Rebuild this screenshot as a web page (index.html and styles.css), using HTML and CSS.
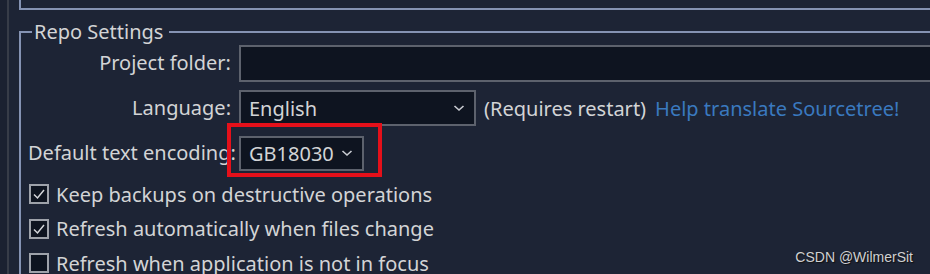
FILE: index.html
```html
<!DOCTYPE html>
<html>
<head>
<meta charset="utf-8">
<link rel="stylesheet" href="styles.css">
</head>
<body>
<div class="app">
  <div class="strip"></div>
  <div class="main">
    <div class="wide">
      <div class="topbox"></div>
      <div class="group">
        <div class="group-head">
          <div class="seg"></div>
          <div class="title">Repo Settings</div>
          <div class="rule"></div>
        </div>
        <div class="group-body">
          <div class="form">
            <div class="label">Project folder:</div>
            <div class="field"><div class="input"></div></div>
            <div class="label">Language:</div>
            <div class="field">
              <div class="select lang">
                <span>English</span>
                <svg class="chev" width="12" height="8" viewBox="0 0 12 8"><polyline points="1.5,2 6,6 10.5,2" fill="none" stroke="#c9ccd2" stroke-width="1.6"/></svg>
              </div>
              <span class="note">(Requires restart)</span>
              <span class="link">Help translate Sourcetree!</span>
            </div>
            <div class="label">Default text encoding:</div>
            <div class="field">
              <div class="select enc">
                <span>GB18030</span>
                <svg class="chev" width="12" height="8" viewBox="0 0 12 8"><polyline points="1.5,2 6,6 10.5,2" fill="none" stroke="#c9ccd2" stroke-width="1.6"/></svg>
                <div class="highlight"></div>
              </div>
            </div>
          </div>
          <div class="checks">
            <div class="check-row">
              <div class="box"><svg width="16" height="16" viewBox="0 0 16 16"><polyline points="3,8.5 6.5,12 13,4" fill="none" stroke="#d4d6da" stroke-width="1.5"/></svg></div>
              <span>Keep backups on destructive operations</span>
            </div>
            <div class="check-row">
              <div class="box"><svg width="16" height="16" viewBox="0 0 16 16"><polyline points="3,8.5 6.5,12 13,4" fill="none" stroke="#d4d6da" stroke-width="1.5"/></svg></div>
              <span>Refresh automatically when files change</span>
            </div>
            <div class="check-row">
              <div class="box"></div>
              <span>Refresh when application is not in focus</span>
            </div>
          </div>
        </div>
      </div>
    </div>
  </div>
</div>
<div class="watermark">CSDN @WilmerSit</div>
</body>
</html>
```
FILE: styles.css
```css
html, body {
  margin: 0;
  padding: 0;
}
body {
  width: 930px;
  height: 274px;
  overflow: hidden;
  background: #1d2435;
  font-family: "Noto Sans", "Open Sans", sans-serif;
  font-size: 20px;
  color: #d3d4d6;
  position: relative;
}
.app {
  display: flex;
  height: 274px;
}
.strip {
  width: 7px;
  flex: none;
  background: #1b2131;
  border-right: 2px solid #373c48;
}
.main {
  flex: 1;
  min-width: 0;
  overflow: hidden;
  padding-left: 10px;
}
.wide {
  width: calc(100% + 40px);
}
.topbox {
  height: 8px;
  border-left: 2px solid #8593b3;
  border-bottom: 2px solid #8593b3;
}
.group {
  margin-top: 9px;
}
.group-head {
  display: flex;
  align-items: center;
  height: 26px;
}
.seg {
  width: 11px;
  height: 12px;
  align-self: flex-end;
  border-top: 2px solid #8593b3;
  border-left: 2px solid #8593b3;
}
.title {
  padding: 0 6px 0 2px;
  line-height: 26px;
  color: #d3d4d6;
}
.rule {
  flex: 1;
  height: 2px;
  background: #8593b3;
}
.group-body {
  border-left: 2px solid #8593b3;
  padding-left: 9px;
}
.form {
  display: grid;
  grid-template-columns: 203px 1fr;
  grid-auto-rows: 36px;
  column-gap: 8px;
  row-gap: 9px;
  margin-left: -2px;
}
.label {
  text-align: right;
  white-space: nowrap;
  line-height: 36px;
  align-self: center;
}
.field {
  display: flex;
  align-items: center;
  gap: 8px;
  white-space: nowrap;
}
.input {
  flex: 1;
  height: 37px;
  box-sizing: border-box;
  background: #0e1420;
  border: 2px solid #5d626d;
}
.select {
  position: relative;
  box-sizing: border-box;
  height: 36px;
  background: #0e1420;
  border: 2px solid #5d626d;
  display: flex;
  align-items: center;
  justify-content: space-between;
  padding: 0 9px 0 8px;
}
.lang {
  width: 237px;
}
.enc {
  width: 125px;
  height: 35px;
}
.chev {
  display: block;
}
.note {
  color: #d3d4d6;
}
.link {
  margin-left: 1px;
  color: #3a79bf;
}
.highlight {
  position: absolute;
  left: -14px;
  top: -15px;
  width: 155px;
  height: 54px;
  box-sizing: border-box;
  border: 4px solid #e5101a;
}
.checks {
  margin-top: 6px;
}
.check-row {
  display: flex;
  align-items: center;
  height: 34.5px;
  gap: 7px;
  white-space: nowrap;
}
.box {
  width: 20px;
  height: 20px;
  box-sizing: border-box;
  margin-left: -1px;
  border: 2px solid #9ea2aa;
  background: #0e1420;
  display: flex;
  align-items: center;
  justify-content: center;
}
.box svg {
  display: block;
}
.watermark {
  position: absolute;
  right: 17px;
  top: 249px;
  font-family: "Liberation Sans", Arial, sans-serif;
  font-size: 14px;
  color: #cfd0d2;
  text-shadow: 1px 1px 1px #111;
}
```
